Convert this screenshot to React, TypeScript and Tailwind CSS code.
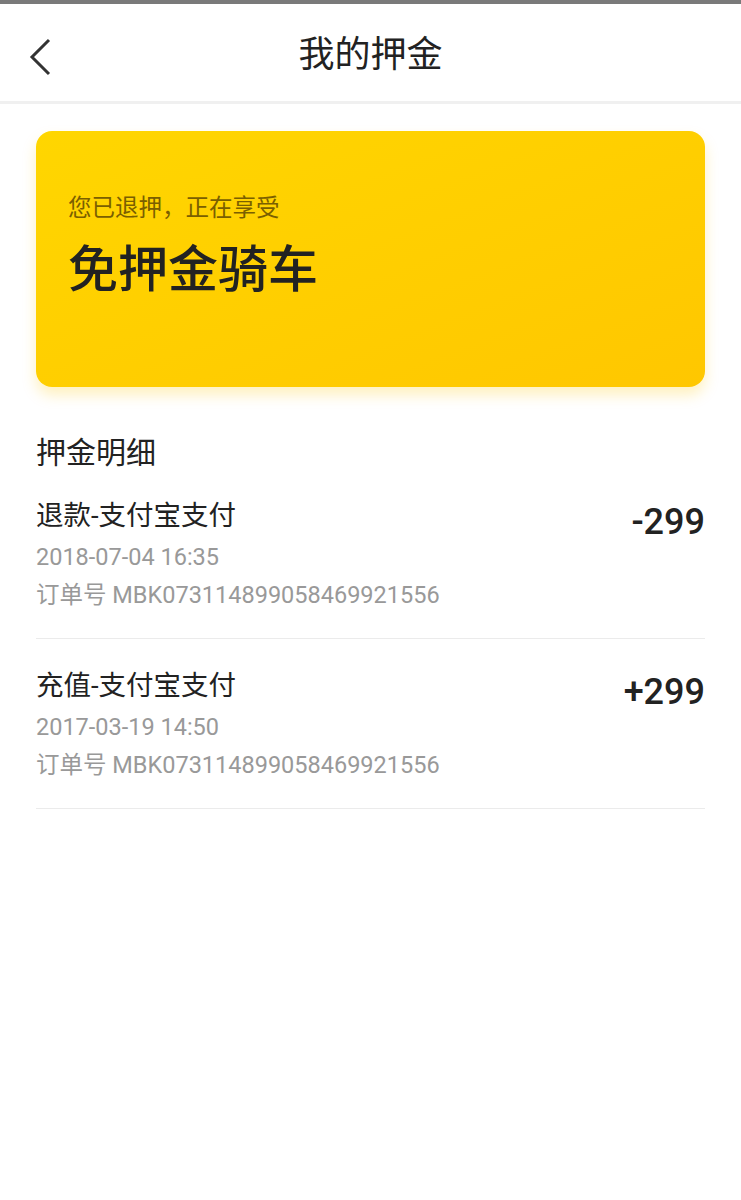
import React from "react";

const font = { fontFamily: 'Roboto, "Noto Sans CJK SC", sans-serif' };

function Row({ title, date, order, amount }: { title: string; date: string; order: string; amount: string }) {
  return (
    <div className="flex justify-between border-b border-[#ebebeb] pt-[28px] pb-[27px]">
      <div className="flex flex-col">
        <div className="text-[27.5px] leading-[38px] text-[#222]">{title}</div>
        <div className="mt-[6px] text-[23.5px] leading-[32px] text-[#999]">{date}</div>
        <div className="mt-[6px] text-[23.5px] leading-[32px] text-[#999]">{order}</div>
      </div>
      <div className="pt-[3px] text-[36px] leading-[44px] font-medium text-[#222]">{amount}</div>
    </div>
  );
}

export default function App() {
  return (
    <div className="min-h-[1200px] w-[741px] bg-white" style={font}>
      <div className="h-[4px] bg-[#7a7a7a]" />
      <div className="relative flex h-[100px] items-center justify-center border-b-[3px] border-[#f0f0f0] pt-[4px]">
        <svg className="absolute left-[26px] top-[33px]" width="28" height="40" viewBox="0 0 28 40">
          <path d="M23 3 L6 20 L23 37" fill="none" stroke="#333" strokeWidth="3" />
        </svg>
        <div className="text-[36px] leading-[44px] text-[#222]">我的押金</div>
      </div>
      <div className="px-[36px] pt-[27px]">
        <div className="h-[256px] rounded-[16px] bg-gradient-to-br from-[#ffd600] to-[#ffc700] pl-[32px] pt-[61px] shadow-[0_8px_14px_rgba(255,200,0,0.25)]">
          <div className="text-[23.5px] leading-[32px] text-[#7a5f00]">您已退押，正在享受</div>
          <div className="mt-[16px] text-[50px] leading-[60px] font-medium text-[#222]">免押金骑车</div>
        </div>
        <div className="mt-[50px] text-[30px] leading-[32px] text-[#222]">押金明细</div>
        <div>
          <Row title="退款-支付宝支付" date="2018-07-04 16:35" order="订单号 MBK073114899058469921556" amount="-299" />
          <Row title="充值-支付宝支付" date="2017-03-19 14:50" order="订单号 MBK073114899058469921556" amount="+299" />
        </div>
      </div>
    </div>
  );
}
